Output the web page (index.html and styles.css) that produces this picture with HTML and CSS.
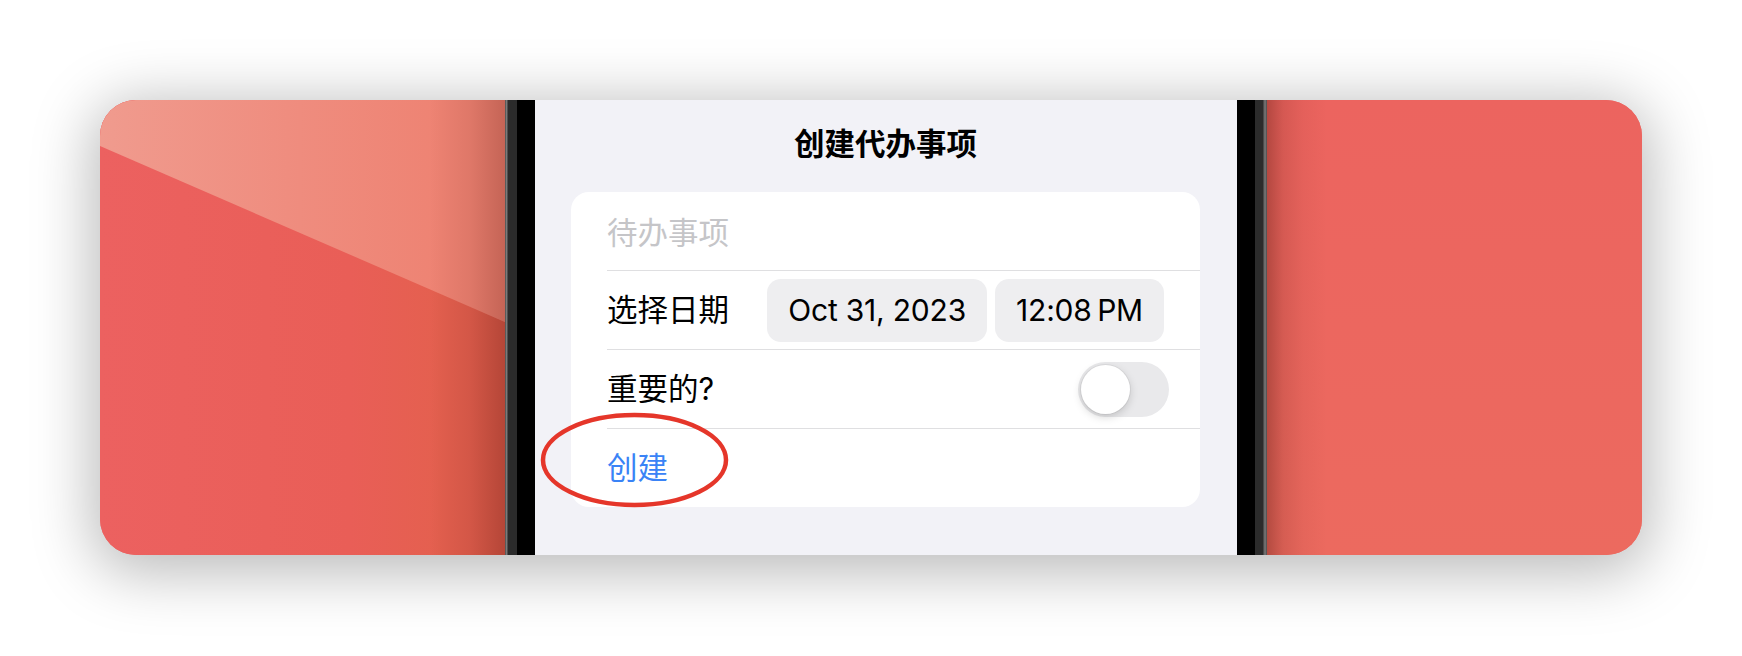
FILE: index.html
```html
<!DOCTYPE html>
<html lang="zh-CN">
<head>
<meta charset="utf-8">
<title>创建代办事项</title>
<link rel="stylesheet" href="styles.css">
</head>
<body>
<div class="frame">
  <div class="wall-left"></div>
  <div class="bezel bezel-left"><div class="edge"></div><div class="rim"></div><div class="black"></div></div>
  <div class="screen">
    <div class="nav-title">创建代办事项</div>
    <div class="group">
      <div class="row">
        <span class="placeholder">待办事项</span>
      </div>
      <div class="row sep">
        <span class="label">选择日期</span>
        <div class="pills">
          <span class="pill">Oct 31, 2023</span>
          <span class="pill">12:08<span class="nsp">&#8239;</span>PM</span>
        </div>
      </div>
      <div class="row sep toggle-row">
        <span class="label">重要的?</span>
        <span class="toggle"><span class="knob"></span></span>
      </div>
      <div class="row sep">
        <span class="action">创建</span>
      </div>
    </div>
    <svg class="circle" width="191" height="98" viewBox="0 0 191 98">
      <ellipse cx="95.5" cy="49" rx="91.5" ry="45" fill="none" stroke="#e5362a" stroke-width="4.5"/>
    </svg>
  </div>
  <div class="bezel bezel-right"><div class="black"></div><div class="rim"></div><div class="edge"></div></div>
  <div class="wall-right"></div>
</div>
</body>
</html>
```
FILE: styles.css
```css
html, body {
  margin: 0;
  padding: 0;
  background: #ffffff;
}
body {
  width: 1742px;
  height: 656px;
  overflow: hidden;
  font-family: Inter, "Noto Sans CJK SC", sans-serif;
}
.frame {
  margin: 100px 0 0 100px;
  width: 1542px;
  height: 455px;
  border-radius: 36px;
  overflow: hidden;
  display: flex;
  box-shadow: 0 10px 60px 8px rgba(0, 0, 0, 0.27);
  background: #ec6560;
}
.wall-left {
  position: relative;
  width: 405px;
  flex: none;
  background:
    linear-gradient(to right, rgba(0,0,0,0) 0, rgba(0,0,0,0) 330px, rgba(90,20,10,0.12) 370px, rgba(90,20,10,0.34) 405px),
    linear-gradient(to right, #ec6160 0, #e95e57 250px, #e4604f 340px);
}
.wall-left::before {
  content: "";
  position: absolute;
  inset: 0;
  clip-path: polygon(0 0, 100% 0, 100% 222px, 0 46px);
  background:
    linear-gradient(to right, rgba(0,0,0,0) 0, rgba(0,0,0,0) 330px, rgba(90,20,10,0.10) 370px, rgba(90,20,10,0.28) 405px),
    linear-gradient(to right, #f09b8e 0, #ef8c7e 200px, #ee8373 340px);
}
.bezel {
  display: flex;
  flex: none;
}
.bezel .edge {
  width: 3px;
  background: linear-gradient(to right, #4a4a4a, #7a7a7a, #3a3a3a);
}
.bezel .rim {
  width: 9px;
  background: #2b2b2b;
}
.bezel .black {
  width: 18px;
  background: #000000;
}
.bezel-right .rim { width: 8px; }
.bezel-right .edge {
  width: 4px;
  background: linear-gradient(to right, #3a3a3a, #7a7a7a, #4a4a4a);
}
.screen {
  position: relative;
  width: 702px;
  flex: none;
  background: #f2f2f7;
  padding: 24px 37px 0 36px;
  box-sizing: border-box;
}
.nav-title {
  text-align: center;
  font-size: 30.5px;
  font-weight: 700;
  line-height: 40px;
  color: #000000;
  margin-bottom: 28px;
}
.group {
  background: #ffffff;
  border-radius: 18px;
  overflow: hidden;
}
.row {
  height: 78px;
  display: flex;
  align-items: center;
  padding: 0 36px 0 0;
  margin-left: 36px;
  font-size: 30.5px;
  line-height: 40px;
}
.row.sep {
  border-top: 1px solid #dfdfe1;
}
.placeholder {
  color: #c5c5c8;
  padding-top: 3px;
}
.label {
  color: #000000;
}
.pills {
  margin-left: auto;
  display: flex;
  gap: 8px;
}
.pill {
  height: 63px;
  display: flex;
  align-items: center;
  padding: 0 21px;
  border-radius: 14px;
  background: #eeeef0;
  color: #000000;
  font-size: 30px;
  letter-spacing: -0.2px;
}
.nsp {
  letter-spacing: -4px;
}
.toggle-row {
  padding-right: 31px;
}
.toggle {
  margin-left: auto;
  position: relative;
  width: 91px;
  height: 55px;
  border-radius: 28px;
  background: #e9e9eb;
}
.knob {
  position: absolute;
  left: 3px;
  top: 3px;
  width: 49px;
  height: 49px;
  border-radius: 50%;
  background: #ffffff;
  box-shadow: 0 3px 8px rgba(0, 0, 0, 0.17), 0 0 0 1px rgba(0, 0, 0, 0.05);
}
.action {
  color: #3a83f6;
}
.circle {
  position: absolute;
  left: 4px;
  top: 311px;
}
.wall-right {
  flex: 1;
  background:
    linear-gradient(to right, rgba(80,20,10,0.36) 0, rgba(80,20,10,0.15) 16px, rgba(80,20,10,0.05) 36px, rgba(0,0,0,0) 60px),
    linear-gradient(to bottom, #ec645f, #ec6a5f);
}
```
